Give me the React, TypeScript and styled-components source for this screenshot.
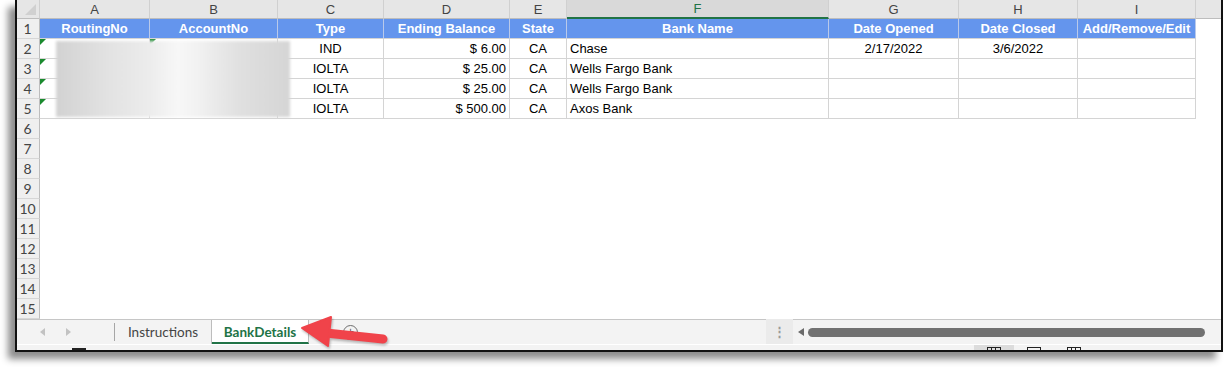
import React from "react";
import styled, { createGlobalStyle, css } from "styled-components";

const GlobalStyle = createGlobalStyle`
  html, body {
    margin: 0;
    padding: 0;
    background: #ffffff;
  }
  body {
    font-family: "Liberation Sans", Arial, sans-serif;
    overflow: hidden;
  }
`;

const GRID_LINE = "#d4d4d4";
const EXCEL_GREEN = "#217346";

const columns = [
  { key: "A", width: 110 },
  { key: "B", width: 128 },
  { key: "C", width: 106 },
  { key: "D", width: 126 },
  { key: "E", width: 57 },
  { key: "F", width: 262 },
  { key: "G", width: 130 },
  { key: "H", width: 119 },
  { key: "I", width: 118 },
];

type Align = "left" | "center" | "right";

const headers = [
  "RoutingNo",
  "AccountNo",
  "Type",
  "Ending Balance",
  "State",
  "Bank Name",
  "Date Opened",
  "Date Closed",
  "Add/Remove/Edit",
];

const aligns: Align[] = [
  "left",
  "left",
  "center",
  "right",
  "center",
  "left",
  "center",
  "center",
  "center",
];

const rows: string[][] = [
  ["", "", "IND", "$ 6.00", "CA", "Chase", "2/17/2022", "3/6/2022", ""],
  ["", "", "IOLTA", "$ 25.00", "CA", "Wells Fargo Bank", "", "", ""],
  ["", "", "IOLTA", "$ 25.00", "CA", "Wells Fargo Bank", "", "", ""],
  ["", "", "IOLTA", "$ 500.00", "CA", "Axos Bank", "", "", ""],
];

const Page = styled.div`
  position: relative;
  width: 1224px;
  height: 367px;
`;

const Window = styled.div`
  margin-left: 15px;
  width: 1208px;
  height: 352px;
  box-sizing: border-box;
  border: 2px solid #111;
  border-top: none;
  background: #fff;
  display: flex;
  flex-direction: column;
  box-shadow: -7px 7px 7px rgba(0, 0, 0, 0.45);
`;

const Sheet = styled.div`
  position: relative;
  display: grid;
  grid-template-columns: 23px ${columns.map((c) => `${c.width}px`).join(" ")} 1fr;
  grid-template-rows: 19px repeat(15, 20px);
`;

const Corner = styled.div`
  background: #e6e6e6;
  border-right: 1px solid #cfcfcf;
  border-bottom: 1px solid #bdbdbd;
  box-sizing: border-box;
  position: relative;
  &::after {
    content: "";
    position: absolute;
    right: 3px;
    bottom: 3px;
    border-left: 11px solid transparent;
    border-bottom: 11px solid #d0d0d0;
  }
`;

const ColLetter = styled.div<{ $selected?: boolean }>`
  background: ${(p) => (p.$selected ? "#d9d9d9" : "#e6e6e6")};
  border-right: 1px solid #d0d0d0;
  border-bottom: ${(p) => (p.$selected ? `2px solid ${EXCEL_GREEN}` : "1px solid #bdbdbd")};
  box-sizing: border-box;
  color: ${(p) => (p.$selected ? EXCEL_GREEN : "#444")};
  font-family: "Liberation Sans", Arial, sans-serif;
  font-size: 13px;
  display: flex;
  align-items: center;
  justify-content: center;
`;

const RowNum = styled.div`
  background: #efefef;
  border-right: 1px solid #bdbdbd;
  border-bottom: 1px solid #d6d6d6;
  box-sizing: border-box;
  color: #444;
  font-family: Lato, "Noto Sans", sans-serif;
  font-size: 14px;
  display: flex;
  align-items: center;
  justify-content: center;
  padding-right: 1px;
`;

const HeadCell = styled.div`
  background: #6495ed;
  color: #fff;
  font-weight: bold;
  font-size: 13px;
  border-right: 1px solid #b9c9ea;
  border-bottom: 1px solid ${GRID_LINE};
  box-sizing: border-box;
  display: flex;
  align-items: center;
  justify-content: center;
  white-space: nowrap;
  overflow: hidden;
`;

const alignMap: Record<Align, string> = {
  left: "flex-start",
  center: "center",
  right: "flex-end",
};

const Cell = styled.div<{ $align: Align; $flag?: boolean }>`
  position: relative;
  background: #fff;
  color: #000;
  font-size: 13px;
  border-right: 1px solid ${GRID_LINE};
  border-bottom: 1px solid ${GRID_LINE};
  box-sizing: border-box;
  display: flex;
  align-items: center;
  justify-content: ${(p) => alignMap[p.$align]};
  padding: 0 3px;
  white-space: nowrap;
  ${(p) =>
    p.$flag &&
    css`
      &::before {
        content: "";
        position: absolute;
        left: 0;
        top: 0;
        border-top: 6px solid #1a8a2e;
        border-right: 6px solid transparent;
      }
    `}
`;

const Blank = styled.div<{ $span: string }>`
  grid-column: ${(p) => p.$span};
  background: #fff;
`;

const HeaderBlank = styled.div`
  background: #e6e6e6;
  border-bottom: 1px solid #bdbdbd;
  box-sizing: border-box;
`;

const Redaction = styled.div`
  position: absolute;
  left: 39px;
  top: 41px;
  width: 234px;
  height: 76px;
  background: linear-gradient(
    90deg,
    #d2d2d2 0%,
    #e2e2e2 22%,
    #ececec 40%,
    #f7f7f7 52%,
    #f2f2f2 60%,
    #e0e0e0 78%,
    #d5d5d5 100%
  );
  filter: blur(1.5px);
`;

const TabBar = styled.div`
  height: 25px;
  display: flex;
  align-items: stretch;
  background: #f3f3f3;
  border-top: 1px solid #c6c6c6;
  box-sizing: border-box;
`;

const NavArea = styled.div`
  width: 98px;
  display: flex;
  align-items: center;
  gap: 21px;
  padding-left: 23px;
  box-sizing: border-box;
  border-right: 1px solid #a6a6a6;
  margin: 3px 0;
`;

const NavArrow = styled.span<{ $dir: "left" | "right" }>`
  width: 0;
  height: 0;
  border-top: 4px solid transparent;
  border-bottom: 4px solid transparent;
  ${(p) =>
    p.$dir === "left"
      ? css`border-right: 5px solid #c2c2c2;`
      : css`border-left: 5px solid #c2c2c2;`}
`;

const Tab = styled.div<{ $active?: boolean }>`
  width: 97px;
  box-sizing: border-box;
  display: flex;
  align-items: center;
  justify-content: center;
  font-family: Lato, "Noto Sans", sans-serif;
  font-size: 13.5px;
  border-right: 1px solid #bdbdbd;
  color: ${(p) => (p.$active ? EXCEL_GREEN : "#444")};
  font-weight: ${(p) => (p.$active ? 700 : 400)};
  background: ${(p) => (p.$active ? "#fff" : "transparent")};
  border-bottom: ${(p) => (p.$active ? `2px solid ${EXCEL_GREEN}` : "none")};
  padding-top: ${(p) => (p.$active ? "1px" : "0")};
`;

const AddSheet = styled.div`
  margin-left: 34px;
  align-self: center;
  width: 13px;
  height: 13px;
  border: 1px solid #6e6e6e;
  border-radius: 50%;
  display: flex;
  align-items: center;
  justify-content: center;
  color: #555;
  font-size: 12px;
  line-height: 1;
`;

const Spacer = styled.div`
  flex: 1;
`;

const Splitter = styled.div`
  width: 27px;
  background: #ebebeb;
  display: flex;
  align-items: center;
  justify-content: center;
  margin-top: -1px;
  color: #9a9a9a;
  font-size: 13px;
  font-weight: bold;
`;

const ScrollTrack = styled.div`
  width: 428px;
  display: flex;
  align-items: center;
  padding: 0 16px 0 5px;
  box-sizing: border-box;
  gap: 4px;
`;

const ScrollArrow = styled.span`
  width: 0;
  height: 0;
  border-top: 4px solid transparent;
  border-bottom: 4px solid transparent;
  border-right: 6px solid #6a6a6a;
`;

const Thumb = styled.div`
  flex: 1;
  height: 9px;
  background: #717171;
  border-radius: 5px;
`;

const StatusStrip = styled.div`
  flex: 1;
  background: #f3f3f3;
  border-top: 1px solid #fff;
  display: flex;
  align-items: flex-end;
  position: relative;
  overflow: hidden;
`;

const StatusMark = styled.div`
  margin-left: 55px;
  width: 14px;
  height: 2px;
  background: #222;
`;

const ViewGroup = styled.div`
  margin-left: 888px;
  display: flex;
  align-self: stretch;
`;

const ViewButton = styled.div<{ $active?: boolean }>`
  width: 40px;
  display: flex;
  justify-content: center;
  align-items: flex-end;
  background: ${(p) => (p.$active ? "#dcdcdc" : "transparent")};
`;

const ViewIcon = styled.div<{ $split?: boolean }>`
  width: 12px;
  height: 2px;
  border: 1px solid #222;
  border-bottom: none;
  ${(p) =>
    p.$split &&
    css`
      background: linear-gradient(90deg, transparent 3px, #222 3px, #222 4px, transparent 4px, transparent 7px, #222 7px, #222 8px, transparent 8px);
    `}
`;

const Callout = styled.svg`
  position: absolute;
  left: 296px;
  top: 311px;
  overflow: visible;
  filter: drop-shadow(1px 2px 1px rgba(0, 0, 0, 0.25));
`;

export default function App() {
  return (
    <Page>
      <GlobalStyle />
      <Window>
        <Sheet>
          <Corner />
          {columns.map((c) => (
            <ColLetter key={c.key} $selected={c.key === "F"}>
              {c.key}
            </ColLetter>
          ))}
          <HeaderBlank />

          <RowNum>1</RowNum>
          {headers.map((h) => (
            <HeadCell key={h}>{h}</HeadCell>
          ))}
          <Blank $span="auto" />

          {rows.map((r, i) => (
            <React.Fragment key={i}>
              <RowNum>{i + 2}</RowNum>
              {r.map((v, j) => (
                <Cell
                  key={j}
                  $align={aligns[j]}
                  $flag={j === 0 || (j === 1 && i === 0)}
                >
                  {v}
                </Cell>
              ))}
              <Blank $span="auto" />
            </React.Fragment>
          ))}

          {Array.from({ length: 10 }, (_, k) => (
            <React.Fragment key={k}>
              <RowNum>{k + 6}</RowNum>
              <Blank $span="2 / -1" />
            </React.Fragment>
          ))}
          <Redaction />
        </Sheet>

        <TabBar>
          <NavArea>
            <NavArrow $dir="left" />
            <NavArrow $dir="right" />
          </NavArea>
          <Tab>Instructions</Tab>
          <Tab $active>BankDetails</Tab>
          <AddSheet>+</AddSheet>
          <Spacer />
          <Splitter>⋮</Splitter>
          <ScrollTrack>
            <ScrollArrow />
            <Thumb />
          </ScrollTrack>
        </TabBar>

        <StatusStrip>
          <StatusMark />
          <ViewGroup>
            <ViewButton $active>
              <ViewIcon $split />
            </ViewButton>
            <ViewButton>
              <ViewIcon />
            </ViewButton>
            <ViewButton>
              <ViewIcon $split />
            </ViewButton>
          </ViewGroup>
        </StatusStrip>
      </Window>

      <Callout width="100" height="40" viewBox="0 0 100 40">
        <line
          x1="30"
          y1="22"
          x2="87"
          y2="28"
          stroke="#f0434a"
          strokeWidth="9"
          strokeLinecap="round"
        />
        <polygon points="6,17 35,6 32,35" fill="#f0434a" strokeLinejoin="round" stroke="#f0434a" strokeWidth="2" />
      </Callout>
    </Page>
  );
}
